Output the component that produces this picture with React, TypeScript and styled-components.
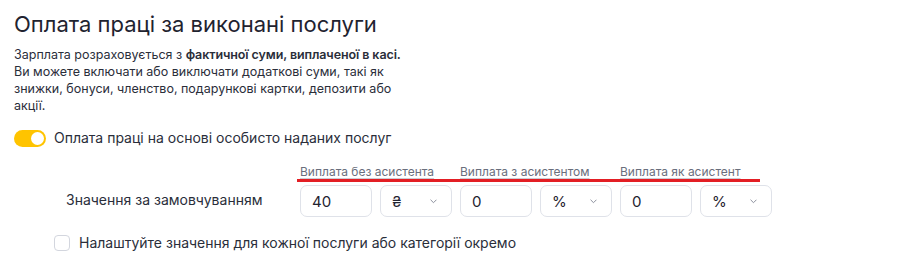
import React from 'react';
import styled, { createGlobalStyle } from 'styled-components';

const GlobalStyle = createGlobalStyle`
  body {
    margin: 0;
    background: #ffffff;
    font-family: Inter, 'Noto Sans', sans-serif;
    color: #1f2330;
  }
`;

type Unit = '₴' | '%';

type Payout = {
  label: string;
  value: string;
  unit: Unit;
};

const payouts: Payout[] = [
  { label: 'Виплата без асистента', value: '40', unit: '₴' },
  { label: 'Виплата з асистентом', value: '0', unit: '%' },
  { label: 'Виплата як асистент', value: '0', unit: '%' },
];

const PageDiv = styled.div`
  padding: 9px 14px;
`;

const TitleH2 = styled.h2`
  margin: 0;
  font-size: 22px;
  line-height: 30px;
  font-weight: 400;
  color: #1f2330;
`;

const DescriptionP = styled.p`
  margin: 7px 0 0;
  width: 394px;
  font-size: 12.5px;
  line-height: 17px;
  color: #2a2e3a;

  b {
    font-weight: 600;
    letter-spacing: -0.1px;
  }
`;

const ToggleLabel = styled.label`
  display: flex;
  align-items: center;
  gap: 8px;
  margin-top: 14px;
  font-size: 14px;
  line-height: 20px;
  color: #2a2e3a;
`;

const SwitchSpan = styled.span<{ $on: boolean }>`
  position: relative;
  width: 32px;
  height: 17px;
  border-radius: 9px;
  background: ${(p) => (p.$on ? '#ffc400' : '#d5d8df')};

  &::after {
    content: '';
    position: absolute;
    top: 2px;
    left: ${(p) => (p.$on ? '17px' : '2px')};
    width: 13px;
    height: 13px;
    border-radius: 50%;
    background: #ffffff;
  }
`;

const ValuesGrid = styled.div`
  display: grid;
  grid-template-columns: 234px auto;
  align-items: center;
  margin-top: 16px;
  padding-left: 52px;
`;

const LabelsRow = styled.div`
  grid-column: 2;
  display: flex;
  width: 460px;
  margin-left: -3px;
  padding-left: 3px;
  border-bottom: 3px solid #e31e24;
`;

const PayoutLabel = styled.span`
  width: 160px;
  font-size: 12px;
  line-height: 15px;
  color: #6a6f7d;
  white-space: nowrap;
  text-decoration: underline;
  text-decoration-color: #c9ccd4;
  text-underline-offset: 2px;

  &:last-child {
    width: auto;
  }
`;

const DefaultLabel = styled.span`
  font-size: 14px;
  color: #2a2e3a;
`;

const InputsRow = styled.div`
  display: flex;
  gap: 8px;
  margin-top: 3px;
`;

const Field = styled.div`
  display: flex;
  align-items: center;
  justify-content: space-between;
  box-sizing: border-box;
  width: 72px;
  height: 32px;
  padding: 0 14px 0 11px;
  border: 1px solid #dfe2e9;
  border-radius: 7px;
  font-size: 15px;
  color: #1f2330;
  background: #ffffff;
`;

const ChevronSvg = styled.svg`
  width: 7px;
  height: 5px;
  color: #8a8f9c;
`;

const CheckboxLabel = styled.label`
  display: flex;
  align-items: center;
  gap: 9px;
  margin-top: 17px;
  padding-left: 40px;
  font-size: 14px;
  color: #2a2e3a;
`;

const CheckboxBox = styled.span`
  width: 16px;
  height: 16px;
  box-sizing: border-box;
  border: 1px solid #d3d6de;
  border-radius: 4px;
  background: #ffffff;
`;

function Chevron() {
  return (
    <ChevronSvg viewBox="0 0 7 5" fill="none">
      <path d="M0.8 1 3.5 3.7 6.2 1" stroke="currentColor" strokeWidth="1" strokeLinecap="round" />
    </ChevronSvg>
  );
}

export default function App() {
  return (
    <PageDiv>
      <GlobalStyle />
      <TitleH2>Оплата праці за виконані послуги</TitleH2>
      <DescriptionP>
        Зарплата розраховується з <b>фактичної суми, виплаченої в касі.</b>
        <br />
        Ви можете включати або виключати додаткові суми, такі як знижки, бонуси, членство, подарункові
        картки, депозити або акції.
      </DescriptionP>

      <ToggleLabel>
        <SwitchSpan $on />
        Оплата праці на основі особисто наданих послуг
      </ToggleLabel>

      <ValuesGrid>
        <LabelsRow>
          {payouts.map((p) => (
            <PayoutLabel key={p.label}>{p.label}</PayoutLabel>
          ))}
        </LabelsRow>
        <DefaultLabel>Значення за замовчуванням</DefaultLabel>
        <InputsRow>
          {payouts.map((p) => (
            <React.Fragment key={p.label}>
              <Field>{p.value}</Field>
              <Field>
                {p.unit}
                <Chevron />
              </Field>
            </React.Fragment>
          ))}
        </InputsRow>
      </ValuesGrid>

      <CheckboxLabel>
        <CheckboxBox />
        Налаштуйте значення для кожної послуги або категорії окремо
      </CheckboxLabel>
    </PageDiv>
  );
}
